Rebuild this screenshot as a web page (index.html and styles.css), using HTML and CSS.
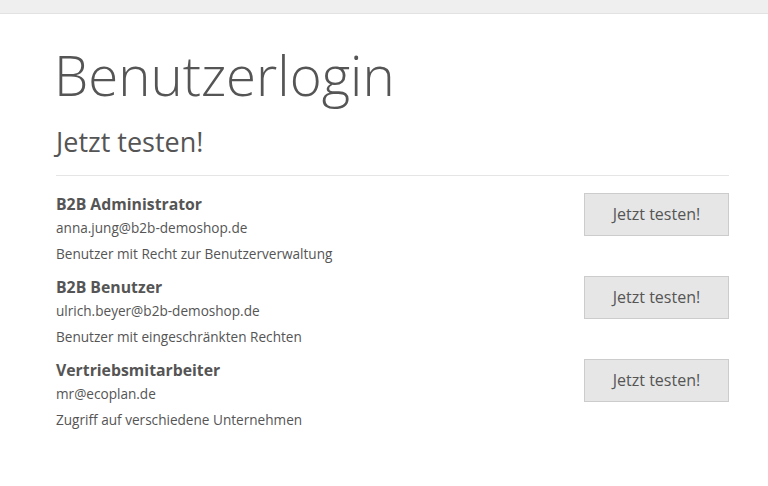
FILE: index.html
```html
<!DOCTYPE html>
<html lang="de">

<head>
    <meta charset="UTF-8">
    <meta name="viewport" content="width=device-width, initial-scale=1.0">
    <title>Benutzerlogin</title>
    <link rel="stylesheet" href="styles.css">
</head>

<body>
    <div class="topbar"></div>
    <main>
        <h1>Benutzerlogin</h1>
        <h2>Jetzt testen!</h2>
        <div class="users">
            <div class="user">
                <div class="info">
                    <strong>B2B Administrator</strong>
                    <span class="mail">anna.jung@b2b-demoshop.de</span>
                    <span class="desc">Benutzer mit Recht zur Benutzerverwaltung</span>
                </div>
                <button type="button">Jetzt testen!</button>
            </div>
            <div class="user">
                <div class="info">
                    <strong>B2B Benutzer</strong>
                    <span class="mail">ulrich.beyer@b2b-demoshop.de</span>
                    <span class="desc">Benutzer mit eingeschränkten Rechten</span>
                </div>
                <button type="button">Jetzt testen!</button>
            </div>
            <div class="user">
                <div class="info">
                    <strong>Vertriebsmitarbeiter</strong>
                    <span class="mail">mr@ecoplan.de</span>
                    <span class="desc">Zugriff auf verschiedene Unternehmen</span>
                </div>
                <button type="button">Jetzt testen!</button>
            </div>
        </div>
    </main>
</body>
</html>
```

FILE: styles.css
```css
body {
    font-family: "Open Sans", "Liberation Sans", sans-serif;
    margin: 0;
    background-color: #fff;
    color: #555;
}
.topbar {
    height: 13px;
    background-color: #efefef;
    border-bottom: 1px solid #e2e2e2;
}
main {
    margin: 0 39px 0 56px;
}
h1 {
    font-weight: 300;
    font-size: 54.6px;
    line-height: 1;
    margin: 34px 0 0 -2px;
    color: #555;
}
h2 {
    font-weight: 400;
    font-size: 27px;
    line-height: 1;
    margin: 25px 0 0 0;
    padding-bottom: 20px;
    border-bottom: 1px solid #e5e5e5;
}
.users {
    padding-top: 17px;
}
.user {
    display: flex;
    justify-content: space-between;
    align-items: flex-start;
    height: 83px;
}
.info {
    display: flex;
    flex-direction: column;
}
.info strong {
    font-size: 15.8px;
    line-height: 22px;
    font-weight: 700;
}
.mail {
    font-size: 13.6px;
    line-height: 25px;
}
.desc {
    font-size: 13.6px;
    line-height: 28px;
}
button {
    font-family: inherit;
    width: 145px;
    height: 43px;
    background-color: #e6e6e6;
    border: 1px solid #ccc;
    color: #555;
    font-size: 16px;
    padding: 0;
    cursor: pointer;
}
```
